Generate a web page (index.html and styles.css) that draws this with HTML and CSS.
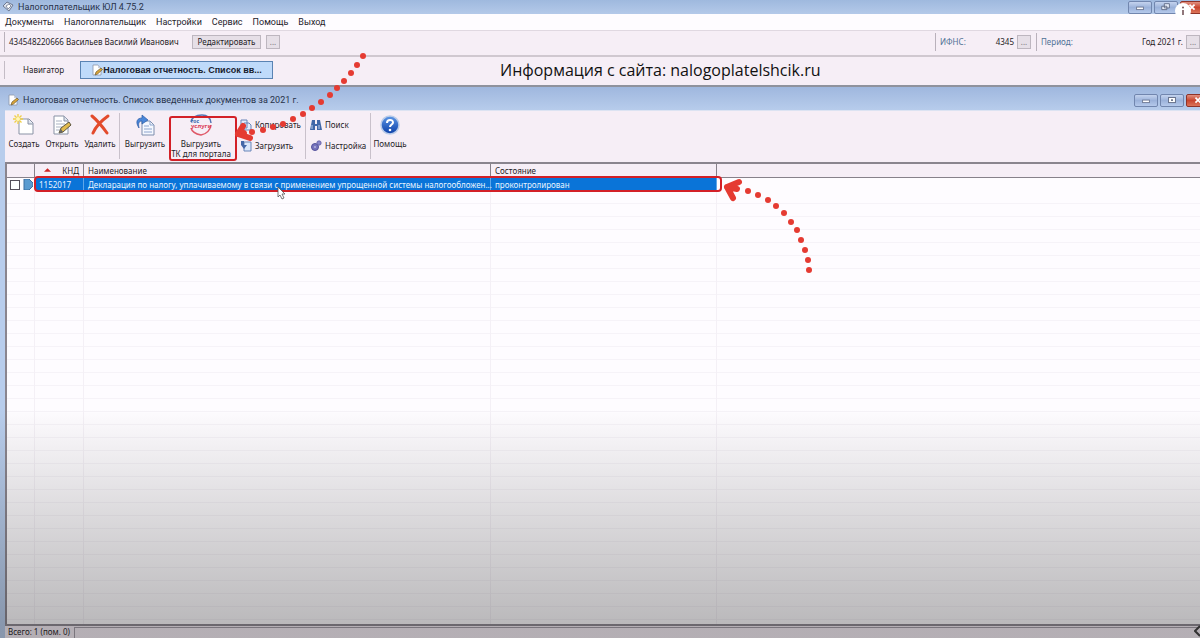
FILE: index.html
```
<!DOCTYPE html>
<html lang="ru">
<head>
<meta charset="utf-8">
<title>Налогоплательщик ЮЛ 4.75.2</title>
<link rel="stylesheet" href="styles.css">
</head>
<body>
<svg class="defs" aria-hidden="true">
  <defs>
    <linearGradient id="blueball" x1="0" y1="0" x2="0" y2="1"><stop offset="0" stop-color="#5e97e6"/><stop offset="1" stop-color="#0b3fa8"/></linearGradient>
    <symbol id="note" viewBox="0 0 12 12">
      <path d="M2 1h5l3 3v7H2z" fill="#fff" stroke="#8a94a8" stroke-width=".8"/>
      <path d="M7 1v3h3z" fill="#c8d0e0"/>
      <path d="M4 11l1-3 5-4 1.500 1.500-5 4.500z" fill="#dba638" stroke="#6b5a33" stroke-width=".7"/>
    </symbol>
  </defs>
</svg>
<div class="app">
  <header class="titlebar main-title">
    <svg class="ico12" viewBox="0 0 12 12"><path d="M1 5l4-4 6 3-4 6z" fill="#dfe4ee" stroke="#6d7890"/><path d="M4 5l3-2 2 2-3 3z" fill="#fff" stroke="#5d6a85" stroke-width=".7"/></svg>
    <span class="grow">Налогоплательщик ЮЛ 4.75.2</span>
    <button class="win" aria-label="Свернуть"><svg viewBox="0 0 24 13"><rect x="8" y="6" width="8" height="3" fill="#fff" stroke="#66718c"/></svg></button>
    <button class="win" aria-label="Восстановить"><svg viewBox="0 0 24 13"><path d="M10 2h6v5h-6zM7 5h6v4H7z" fill="#e8eefa" stroke="#56617c"/></svg></button>
    <button class="win close" aria-label="Закрыть"><svg viewBox="0 0 24 13"><path d="M9 3l6 6M15 3L9 9" stroke="#fff" stroke-width="2"/></svg></button>
  </header>
  <nav class="menu">
    <a href="#">Документы</a><a href="#">Налогоплательщик</a><a href="#">Настройки</a><a href="#">Сервис</a><a href="#">Помощь</a><a href="#">Выход</a>
  </nav>
  <section class="userbar">
    <span class="user">434548220666 Васильев Василий Иванович</span>
    <button class="btn edit">Редактировать</button>
    <button class="btn dots">...</button>
    <span class="grow"></span>
    <div class="field ifns"><span class="cap">ИФНС:</span><span>4345</span><button class="btn dots">...</button></div>
    <div class="field period"><span class="cap">Период:</span><span>Год 2021 г.</span><button class="btn dots">...</button></div>
  </section>
  <section class="tabs">
    <button class="tab">Навигатор</button>
    <button class="tab active"><svg class="ico12"><use href="#note"/></svg>Налоговая отчетность. Список вв...</button>
  </section>
  <main class="child">
    <div class="titlebar child-title">
      <svg class="ico12"><use href="#note"/></svg>
      <span class="grow">Налоговая отчетность. Список введенных документов за 2021 г.</span>
      <button class="win" aria-label="Свернуть"><svg viewBox="0 0 24 13"><rect x="8" y="6" width="8" height="3" fill="#fff" stroke="#66718c"/></svg></button>
      <button class="win" aria-label="Развернуть"><svg viewBox="0 0 24 13"><rect x="8" y="3" width="8" height="6" fill="#fff" stroke="#56617c"/><path d="M11 6h2" stroke="#56617c" stroke-width="2"/></svg></button>
      <button class="win close" aria-label="Закрыть"><svg viewBox="0 0 24 13"><path d="M9 3l6 6M15 3L9 9" stroke="#fff" stroke-width="2"/></svg></button>
    </div>
    <div class="content">
      <div class="toolbar">
        <button class="tool"><svg viewBox="0 0 22 22"><path d="M6 5h10l4 4v11H6z" fill="#fff" stroke="#8992a5"/><path d="M15 5v5h5" fill="#dde3ee" stroke="#8992a5"/><path d="M5 0v10M0 5h10M1.500 1.500l7 7M8.500 1.500l-7 7" stroke="#f0cf45" stroke-width="1.300"/><circle cx="5" cy="5" r="2" fill="#fff6b8"/></svg>Создать</button>
        <button class="tool"><svg viewBox="0 0 22 22"><path d="M3 2h10l4 4v14H3z" fill="#fff" stroke="#8992a5"/><path d="M13 2v5h4" fill="#dde3ee" stroke="#8992a5"/><path d="M5 7h6M5 10h9M5 13h7M5 16h4" stroke="#a9b1c1"/><path d="M8 19l2-5 8-6 2 3-8 7z" fill="#e2bb4d" stroke="#5d563f"/><path d="M8 19l2-4 2 3z" fill="#666"/></svg>Открыть</button>
        <button class="tool"><svg viewBox="0 0 22 22"><path d="M3 2c6 5 10 10 15 17M19 2C12 7 7 12 4 19" fill="none" stroke="#e34b2c" stroke-width="3" stroke-linecap="round"/></svg>Удалить</button>
        <span class="sep"></span>
        <button class="tool wide"><svg viewBox="0 0 22 22"><path d="M8 7h8l4 4v10H8z" fill="#f5f8ff" stroke="#7d8dac"/><path d="M16 7v4h4M10 12h5M10 15h8M10 18h8" fill="none" stroke="#8da4cd"/><path d="M5 14C1 8 3 4 8 4V1l6 5-6 4V7C5 7 4 9 5 14z" fill="#4a86d8" stroke="#2c5ba5" stroke-width=".7"/></svg>Выгрузить</button>
        <button class="tool gos"><svg viewBox="0 0 24 22"><path d="M2 8C3 3 8 1 13 1c5 0 9 3 9 8" fill="none" stroke="#5577b5" stroke-width="1.500"/><path d="M2 14c1 4 5 6 10 7 5-1 9-4 10-10" fill="none" stroke="#df5968" stroke-width="1.500"/><text x="2" y="9" class="g1">гос</text><text x="2" y="14" class="g2">услуги</text></svg><span>Выгрузить<br>ТК для портала</span></button>
        <div class="pair copy">
          <button><svg viewBox="0 0 12 12"><path d="M1 1h6v8H1zM4 4h5l2 2v5H4z" fill="#e4edfc" stroke="#6885b8"/></svg>Копировать</button>
          <button><svg viewBox="0 0 12 12"><path d="M4 2h7v9H4z" fill="#dce8fb" stroke="#6885b8"/><path d="M1 1h3v4h3L4 9 1 5z" fill="#4568a8"/></svg>Загрузить</button>
        </div>
        <span class="sep"></span>
        <div class="pair find">
          <button><svg viewBox="0 0 12 12"><path d="M2 1h3v4h2V1h3l2 10H7V7H5v4H0z" fill="#4168a8"/><path d="M2 6v4M9 6v4" stroke="#bcd0f0"/></svg>Поиск</button>
          <button><svg viewBox="0 0 12 12"><circle cx="5" cy="7" r="3.500" fill="#7774bd" stroke="#55539c"/><circle cx="9" cy="3" r="2.200" fill="#8c89cc" stroke="#55539c" stroke-width=".7"/><circle cx="5" cy="7" r="1" fill="#b5b4e0"/></svg>Настройка</button>
        </div>
        <span class="sep"></span>
        <button class="tool"><svg viewBox="0 0 22 22"><circle cx="11" cy="11" r="9" fill="url(#blueball)" stroke="#b9cbe8" stroke-width="1.500"/><path d="M8 9c0-4 6-4 6-.5 0 2-3 2-3 4.500" fill="none" stroke="#fff" stroke-width="2"/><circle cx="11" cy="16" r="1.300" fill="#fff"/></svg>Помощь</button>
      </div>
      <div class="grid">
        <table>
          <colgroup><col class="c-mark"><col class="c-knd"><col class="c-name"><col class="c-state"><col></colgroup>
          <thead><tr><th></th><th class="knd"><svg viewBox="0 0 8 4"><path d="M0 4l4-4 4 4z" fill="#cf2424"/></svg>КНД</th><th>Наименование</th><th>Состояние</th><th></th></tr></thead>
          <tbody><tr>
            <td class="mark"><input type="checkbox" aria-label="Выбрать документ 1152017"><svg viewBox="0 0 10 11"><path d="M1 0h5l4 4v3l-4 4H1z" fill="#5b9bd0" stroke="#3c6f9f"/></svg></td>
            <td class="sel">1152017</td><td class="sel">Декларация по налогу, уплачиваемому в связи с применением упрощенной системы налогообложен...</td><td class="sel">проконтролирован</td><td></td>
          </tr></tbody>
        </table>
        <div class="empty"></div>
      </div>
      <footer class="status"><span>Всего: 1 (пом. 0)</span><div></div></footer>
    </div>
  </main>
</div>
<div class="shade"></div>
<svg class="notes" aria-hidden="true">
  <g fill="none" stroke="#d32027" stroke-width="2">
    <rect x="170" y="117" width="66" height="43" rx="2"/>
    <rect x="35" y="177" width="686" height="14" rx="3"/>
  </g>
  <g fill="none" stroke="#e53b32" stroke-linecap="round" stroke-linejoin="round">
    <path d="M243 126l-5 8 12 4M238 134l6-1" stroke-width="6"/>
    <path d="M739 182l-12 5 6 11M727 187l10 2" stroke-width="6"/>
  </g>
  <g fill="#e53b32">
    <circle cx="363" cy="56" r="3"/><circle cx="357" cy="65" r="3"/><circle cx="351" cy="73" r="3"/><circle cx="344" cy="81" r="3"/><circle cx="337" cy="88" r="3"/><circle cx="330" cy="95" r="3"/><circle cx="321" cy="102" r="3"/><circle cx="312" cy="108" r="3"/><circle cx="303" cy="114" r="3"/><circle cx="293" cy="119" r="3"/><circle cx="283" cy="124" r="3"/><circle cx="273" cy="127" r="3"/><circle cx="263" cy="130" r="3"/><circle cx="252" cy="132" r="3"/>
    <circle cx="748" cy="191" r="3"/><circle cx="758" cy="195" r="3"/><circle cx="768" cy="200" r="3"/><circle cx="776" cy="206" r="3"/><circle cx="784" cy="213" r="3"/><circle cx="791" cy="222" r="3"/><circle cx="797" cy="230" r="3"/><circle cx="801" cy="240" r="3"/><circle cx="805" cy="250" r="3"/><circle cx="808" cy="260" r="3"/><circle cx="809" cy="270" r="3"/>
  </g>
  <path d="M278 187v10l2-2 2 4 2-1-2-4h3z" fill="#fff" stroke="#555" stroke-width=".8"/>
</svg>
<p class="source">Информация с сайта: nalogoplatelshcik.ru</p>
<button class="info" aria-label="Информация"><svg viewBox="0 0 16 16"><circle cx="8" cy="8" r="8" fill="#fff"/><circle cx="8" cy="4.500" r="1" fill="#75555a"/><path d="M8 7v5" stroke="#75555a" stroke-width="1.600"/></svg></button>
<svg class="chev" viewBox="0 0 6 12" aria-hidden="true"><path d="M6 1L1 6l5 5" fill="none" stroke="#333" stroke-width="2"/></svg>
</body>
</html>
```
FILE: styles.css
```
* { box-sizing: border-box; }
body {
  margin: 0;
  position: relative;
  overflow: hidden;
  font: 8px/12px "Noto Sans", "Open Sans", sans-serif;
  color: #1f1c26;
  background: #f6eef6;
}
button { font: inherit; color: inherit; padding: 0; border: 0; background: none; white-space: nowrap; }
svg { display: block; flex: none; }
.defs { position: absolute; width: 0; height: 0; }
.ico12 { width: 12px; height: 12px; }
.grow { flex: 1; }
.app { min-height: 100vh; display: flex; flex-direction: column; }

.titlebar {
  display: flex;
  align-items: center;
  gap: 2px;
  font-family: Roboto, sans-serif;
  font-size: 9px;
  color: #27324a;
}
.titlebar .ico12 { margin-right: 2px; }
.main-title { height: 14px; padding-left: 2px; background: linear-gradient(#9fb9de, #b4c9e9); overflow: hidden; }
.win {
  width: 24px;
  height: 13px;
  border: 1px solid #7186ae;
  border-radius: 2px;
  background: linear-gradient(#c4d3ee, #9bb2da 50%, #b5c9eb);
}
.win svg { width: 22px; height: 11px; }
.win.close { border-color: #8f3328; background: linear-gradient(#e09080, #c8452e 50%, #dc7459); margin-right: -4px; }

.menu { height: 16px; padding: 0 5px; display: flex; align-items: center; gap: 10px; background: #fefcff; font-family: Roboto, sans-serif; font-size: 9px; }
.menu a { color: #24222b; text-decoration: none; }

.userbar { height: 27px; padding: 0 0 2px 4px; display: flex; align-items: center; border-bottom: 2px solid #d0c8d0; border-top: 1px solid #e0d8e1; }
.user { width: 188px; border-left: 1px solid #b9b1bb; padding: 4px 0 4px 4px; white-space: nowrap; }
.btn { height: 14px; border: 1px solid #bdb6bf; background: #e6dfe7; line-height: 12px; }
.edit { width: 69px; margin-right: 5px; }
.dots { width: 14px; color: #77717b; }
.field { display: flex; align-items: center; gap: 3px; border-left: 1px solid #b9b1bb; padding: 2px 0 2px 4px; }
.cap { flex: 1; color: #4f7195; }
.ifns { width: 96px; margin-right: 5px; }
.period { width: 164px; }

.tabs { height: 28px; display: flex; align-items: center; padding: 0 4px 3px; }
.tab { height: 18px; width: 76px; }
.tab:first-child { border-left: 1px solid #c4bcc6; padding-left: 2px; }
.tab.active {
  width: 193px;
  display: flex;
  align-items: center;
  justify-content: center;
  border: 1px solid #5a83b3;
  background: #bfdafa;
  font-family: "Liberation Sans", sans-serif;
  font-size: 9px;
  font-weight: bold;
  color: #18202c;
}

.child { flex: 1; display: flex; flex-direction: column; border-top: 2px solid #8f929d; background: linear-gradient(#9fb7de, #b8cdec 24px); }
.child-title { height: 23px; padding: 3px 0 0 7px; }
.child-title .close { margin-right: -10px; }
.content { flex: 1; margin-left: 5px; display: flex; flex-direction: column; background: #f6eef6; border-top: 1px solid #dce3f2; }

.toolbar { height: 51px; display: flex; align-items: flex-start; }
.tool { width: 38px; padding-top: 3px; display: flex; flex-direction: column; align-items: center; line-height: 16px; }
.tool svg { width: 22px; height: 22px; }
.tool.wide { width: 50px; }
.tool.gos { width: 62px; line-height: 10px; }
.gos span { padding-top: 3px; }
.gos svg { width: 24px; }
.g1 { font: bold 5px "Noto Sans", sans-serif; fill: #3566ad; }
.g2 { font: bold 6px "Noto Sans", sans-serif; fill: #dc4359; }
.sep { width: 1px; height: 46px; margin-top: 2px; background: #c9c1cb; }
.pair { display: flex; flex-direction: column; gap: 7px; padding: 7px 0 0 4px; }
.pair button { display: flex; align-items: center; gap: 3px; height: 14px; }
.pair svg { width: 12px; height: 12px; }
.copy { width: 73px; padding-left: 8px; }
.find { width: 64px; }

.grid { flex: 1; display: flex; flex-direction: column; border-top: 2px solid #8a858e; border-left: 2px solid #8a858e; background: #fefcff; }
table { width: 100%; table-layout: fixed; border-collapse: separate; border-spacing: 0; }
.c-mark { width: 28px; }
.c-knd { width: 49px; }
.c-name { width: 407px; }
.c-state { width: 226px; }
th { height: 14px; padding: 0 4px; text-align: left; font-weight: normal; background: #f6eef6; border-right: 1px solid #87818a; border-bottom: 1px solid #87818a; }
th:last-child { border-right: 0; }
.knd { text-align: right; }
.knd svg { display: inline-block; width: 7px; height: 4px; margin-right: 11px; vertical-align: 2px; }
td { height: 13px; padding: 0 4px; white-space: nowrap; }
.sel { background: #0a74d8; color: #e9f5ff; border-right: 1px solid #5fa6e8; }
.mark { padding: 0 2px 0 3px; }
.mark input { appearance: none; float: left; width: 10px; height: 10px; margin: 1px 3px 0 0; border: 1px solid #55505a; background: #fff; }
.mark svg { width: 10px; height: 11px; }
.empty {
  flex: 1;
  background:
    linear-gradient(#f4f0f6, #f4f0f6) 27px 0 / 1px 100% no-repeat,
    linear-gradient(#f4f0f6, #f4f0f6) 76px 0 / 1px 100% no-repeat,
    linear-gradient(#f4f0f6, #f4f0f6) 483px 0 / 1px 100% no-repeat,
    linear-gradient(#f4f0f6, #f4f0f6) 709px 0 / 1px 100% no-repeat,
    repeating-linear-gradient(#fefcff 0 12px, #f6f3f8 12px 13px);
}
.status { height: 14px; display: flex; border-top: 2px solid #8f8a93; gap: 4px; padding-left: 3px; }
.status div { flex: 1; border-left: 1px solid #a49ea8; border-top: 1px solid #a49ea8; margin-top: 1px; }

.shade { position: absolute; inset: 0; pointer-events: none; background: linear-gradient(transparent 64%, rgba(20, 20, 20, .14) 80%, rgba(20, 20, 20, .29) 98%); }
.notes { position: absolute; inset: 0; width: 100%; height: 100%; pointer-events: none; }
.source { position: absolute; left: 500px; top: 60px; margin: 0; font: 16px/20px "Open Sans", sans-serif; color: #111; white-space: nowrap; }
.info { position: absolute; right: 9px; top: 3px; }
.info svg { width: 16px; height: 16px; }
.chev { position: absolute; right: 0; bottom: 1px; width: 6px; height: 12px; }
```
